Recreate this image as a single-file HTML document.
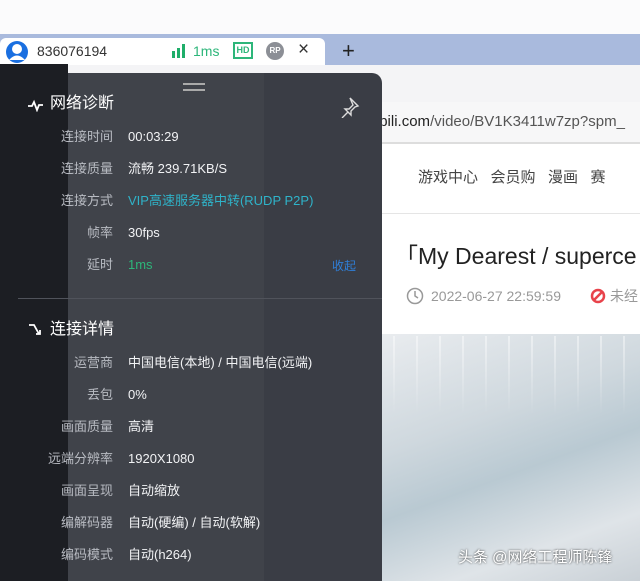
<!DOCTYPE html>
<html><head><meta charset="utf-8"><style>
*{margin:0;padding:0;box-sizing:border-box}
body{width:640px;height:581px;overflow:hidden;position:relative;background:#f4f4f6;font-family:"Liberation Sans","Noto Sans CJK SC",sans-serif}
.abs{position:absolute;white-space:nowrap}
.lab{position:absolute;right:527px;color:#b8bbc2;font-size:13px;line-height:18px;height:18px;text-align:right;white-space:nowrap}
.val{position:absolute;left:128px;color:#f2f3f5;font-size:13px;line-height:18px;height:18px;white-space:nowrap}
</style></head><body>
<div class="abs" style="left:0;top:0;width:640px;height:34px;background:#fbfbfc"></div>
<div class="abs" style="left:0;top:34px;width:640px;height:31px;background:#a9badd"></div>
<div class="abs" style="left:0;top:38px;width:325px;height:27px;background:#fff;border-radius:6px 6px 0 0"></div>
<svg class="abs" style="left:5px;top:40px" width="24" height="24"><circle cx="12" cy="12" r="11" fill="#1a6fe0"/><circle cx="12" cy="9" r="5" fill="#fff"/><path d="M4 20 Q12 11 20 20" fill="#fff"/></svg>
<div class="abs" style="left:37px;top:42px;font-size:14px;line-height:18px;color:#333">836076194</div>
<svg class="abs" style="left:172px;top:44px" width="16" height="14"><rect x="0" y="7" width="3" height="7" fill="#1fae6a"/><rect x="5" y="4" width="3" height="10" fill="#1fae6a"/><rect x="10" y="0" width="3" height="14" fill="#1fae6a"/></svg>
<div class="abs" style="left:193px;top:42px;font-size:14px;line-height:18px;color:#2db67a">1ms</div>
<div class="abs" style="left:233px;top:42px;width:20px;height:17px;border:2px solid #2db67a;color:#2db67a;font-size:9px;font-weight:bold;text-align:center;line-height:13px">HD</div>
<div class="abs" style="left:266px;top:42px;width:18px;height:18px;border-radius:50%;background:#8c8f96;color:#fff;font-size:8px;font-weight:bold;text-align:center;line-height:18px">RP</div>
<div class="abs" style="left:298px;top:40px;font-size:19px;line-height:20px;color:#333">×</div>
<div class="abs" style="left:342px;top:39px;font-size:22px;line-height:24px;color:#222">+</div>
<!-- right content -->
<div class="abs" style="left:382px;top:102px;width:258px;height:40px;background:#f7f7f8"></div>
<div class="abs" style="left:280px;top:113px;font-size:15px;line-height:18px;color:#555">https://www.bi<span style="color:#222">libili.com</span>/video/BV1K3411w7zp?spm_</div>
<div class="abs" style="left:382px;top:142px;width:258px;height:2px;background:#ddd"></div>
<div class="abs" style="left:382px;top:144px;width:258px;height:190px;background:#fff"></div>
<div class="abs" style="left:382px;top:213px;width:258px;height:1px;background:#e5e5e5"></div>
<div class="abs" style="left:418px;top:168px;font-size:15px;line-height:20px;color:#444">游戏中心 &nbsp;&nbsp;会员购 &nbsp;&nbsp;漫画 &nbsp;&nbsp;赛</div>
<div class="abs" style="left:395px;top:242px;font-size:23px;line-height:28px;color:#222">「My Dearest / superce</div>
<svg class="abs" style="left:406px;top:287px" width="18" height="18"><circle cx="9" cy="9" r="7.5" fill="none" stroke="#999" stroke-width="1.5"/><path d="M9 4v5l3 2" fill="none" stroke="#999" stroke-width="1.5"/></svg>
<div class="abs" style="left:431px;top:287px;font-size:14px;line-height:18px;color:#999">2022-06-27 22:59:59</div>
<svg class="abs" style="left:590px;top:288px" width="16" height="16"><circle cx="8" cy="8" r="6" fill="none" stroke="#e8434b" stroke-width="2.5"/><path d="M4 12L12 4" stroke="#e8434b" stroke-width="2.5"/></svg>
<div class="abs" style="left:610px;top:287px;font-size:14px;line-height:18px;color:#999">未经</div>
<div class="abs" style="left:382px;top:334px;width:258px;height:247px;background:linear-gradient(160deg,#e9ecef 0%,#cfd8de 35%,#b9c9d2 55%,#dfe4e8 80%,#c9d0d6 100%)"></div>
<div class="abs" style="left:384px;top:336px;width:256px;height:80px;background:repeating-linear-gradient(90deg,transparent 0 9px,rgba(255,255,255,.45) 9px 11px,transparent 11px 23px);-webkit-mask-image:linear-gradient(180deg,#000,transparent)"></div>
<div class="abs" style="left:458px;top:548px;font-size:15px;line-height:20px;color:#fff;text-shadow:0 0 2px #333">头条 @网络工程师陈锋</div>
<!-- dark -->
<div class="abs" style="left:0;top:64px;width:68px;height:517px;background:#1c1e23"></div>
<div class="abs" style="left:68px;top:73px;width:314px;height:508px;background:#3a3d45;border-radius:0 10px 0 0"></div>
<div class="abs" style="left:68px;top:73px;width:196px;height:508px;background:rgba(255,255,255,.03)"></div>
<div class="abs" style="left:183px;top:83px;width:22px;height:2px;background:#aaa"></div>
<div class="abs" style="left:183px;top:89px;width:22px;height:2px;background:#aaa"></div>
<svg class="abs" style="left:28px;top:98px" width="16" height="14"><path d="M0 8h4l2-4 3 8 2-5h4" fill="none" stroke="#fff" stroke-width="1.8"/></svg>
<div class="abs" style="left:50px;top:94px;font-size:16px;line-height:20px;color:#fff">网络诊断</div>
<svg class="abs" style="left:338px;top:96px" width="22" height="22"><path d="M12 2l8 8-3 1-4 4 0 4-3-3-6 6 6-6-3-3 4 0 4-4z" fill="none" stroke="#ddd" stroke-width="1.4"/></svg>
<div class="lab" style="top:128px">连接时间</div><div class="val" style="top:128px">00:03:29</div>
<div class="lab" style="top:160px">连接质量</div><div class="val" style="top:160px">流畅 239.71KB/S</div>
<div class="lab" style="top:192px">连接方式</div><div class="val" style="top:192px;color:#2fb3c9">VIP高速服务器中转(RUDP P2P)</div>
<div class="lab" style="top:224px">帧率</div><div class="val" style="top:224px">30fps</div>
<div class="lab" style="top:256px">延时</div><div class="val" style="top:256px;color:#2db67a">1ms</div>
<div class="abs" style="left:332px;top:258px;font-size:12px;line-height:16px;color:#2f7fd8">收起</div>
<div class="abs" style="left:18px;top:298px;width:364px;height:1px;background:#50535b"></div>
<svg class="abs" style="left:28px;top:322px" width="16" height="16"><path d="M1 3h5l5 9M8 12h4v-4" fill="none" stroke="#fff" stroke-width="1.8"/></svg>
<div class="abs" style="left:50px;top:320px;font-size:16px;line-height:20px;color:#fff">连接详情</div>
<div class="lab" style="top:354px">运营商</div><div class="val" style="top:354px">中国电信(本地) / 中国电信(远端)</div>
<div class="lab" style="top:386px">丢包</div><div class="val" style="top:386px">0%</div>
<div class="lab" style="top:418px">画面质量</div><div class="val" style="top:418px">高清</div>
<div class="lab" style="top:450px">远端分辨率</div><div class="val" style="top:450px">1920X1080</div>
<div class="lab" style="top:482px">画面呈现</div><div class="val" style="top:482px">自动缩放</div>
<div class="lab" style="top:514px">编解码器</div><div class="val" style="top:514px">自动(硬编) / 自动(软解)</div>
<div class="lab" style="top:546px">编码模式</div><div class="val" style="top:546px">自动(h264)</div>
</body></html>
